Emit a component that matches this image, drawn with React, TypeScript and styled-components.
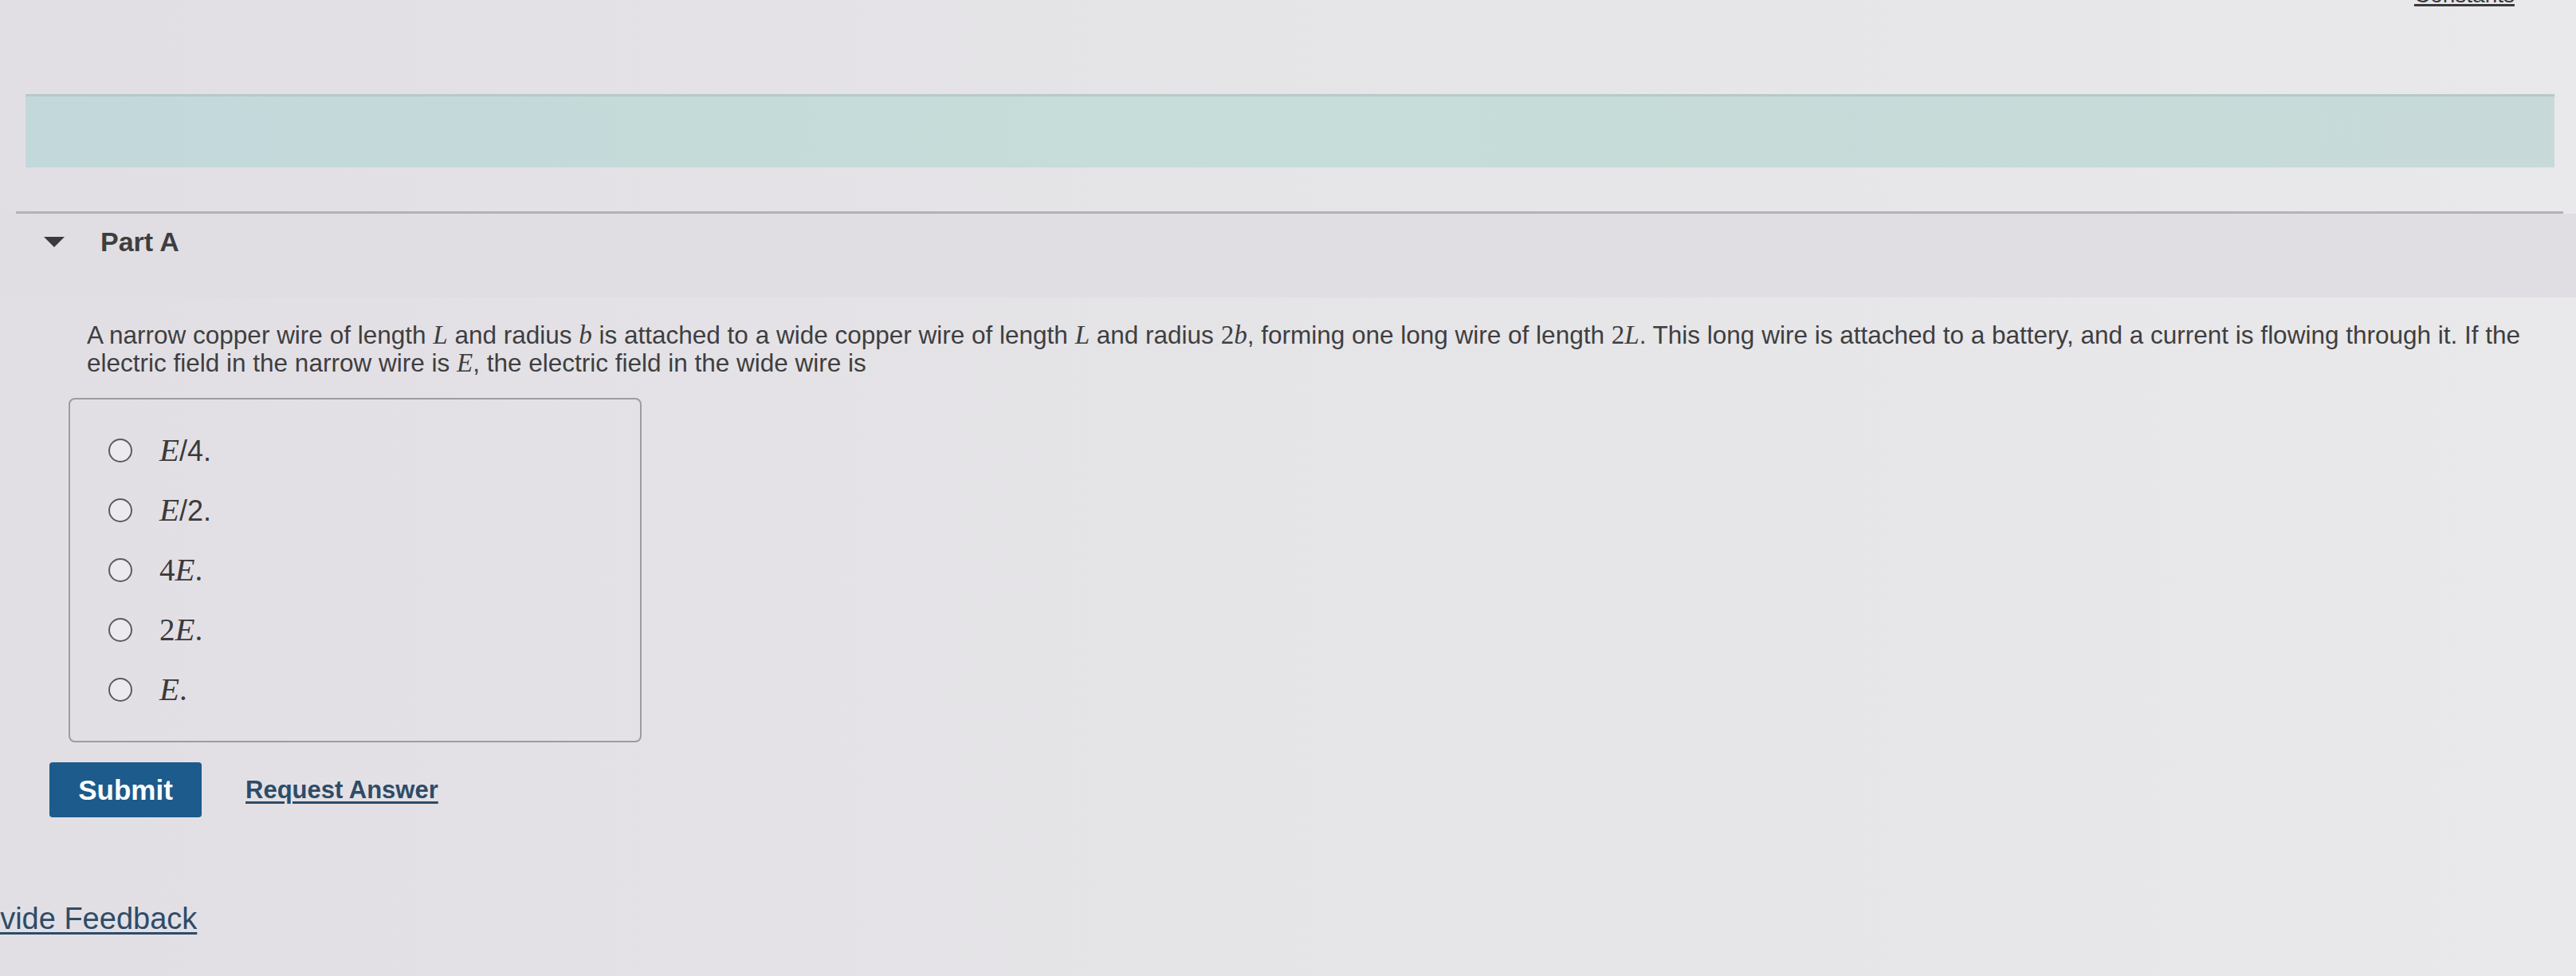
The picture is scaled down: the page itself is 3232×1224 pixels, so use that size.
import React from "react";
import styled, { createGlobalStyle } from "styled-components";

const GlobalStyle = createGlobalStyle`
  html, body {
    margin: 0;
    padding: 0;
    background: #e3e2e6;
  }
  body {
    width: 3232px;
    height: 1224px;
    overflow: hidden;
    font-family: "Liberation Sans", Arial, sans-serif;
    color: #3a3a3c;
  }
`;

const Page = styled.div`
  width: 3232px;
  height: 1224px;
  overflow: hidden;
  background: linear-gradient(90deg, #e2dfe4 0%, #e5e4e7 50%, #e9e8ea 100%);
`;

const TopBar = styled.div`
  height: 12px;
  overflow: hidden;
  display: flex;
  justify-content: flex-end;
  padding-right: 77px;
`;

const ConstantsLink = styled.a`
  margin-top: -20px;
  font-size: 28px;
  line-height: 28px;
  color: #3a3a3c;
  text-decoration: underline;
  text-decoration-thickness: 3px;
`;

const Banner = styled.div`
  margin: 106px 27px 0 32px;
  height: 92px;
  background: linear-gradient(90deg, #c3d8db 0%, #c6ddd9 45%, #c7dad9 100%);
  border-top: 3px solid #b7c9ca;
  box-sizing: border-box;
`;

const Divider = styled.div`
  margin: 55px 16px 0 20px;
  height: 3px;
  background: #b3b2b7;
`;

const PartHeader = styled.div`
  height: 105px;
  box-sizing: border-box;
  padding: 0 0 35px 55px;
  display: flex;
  align-items: center;
  gap: 45px;
  background: #e0dee2;
`;

const Caret = styled.span`
  width: 0;
  height: 0;
  border-left: 13px solid transparent;
  border-right: 13px solid transparent;
  border-top: 13px solid #3a3a3c;
`;

const PartTitle = styled.span`
  font-size: 34px;
  font-weight: 700;
  color: #3e3e40;
  line-height: 40px;
`;

const Content = styled.div`
  padding-left: 62px;
`;

const Question = styled.p`
  margin: 30px 0 0 47px;
  font-size: 31.5px;
  line-height: 35px;
  white-space: nowrap;
  color: #3e3e40;
`;

const M = styled.span`
  font-family: "Liberation Serif", "Times New Roman", serif;
  font-style: italic;
  font-size: 1.05em;
`;

const N = styled.span`
  font-family: "Liberation Serif", "Times New Roman", serif;
  font-size: 1.05em;
`;

const OptionsBox = styled.div`
  margin: 26px 0 0 24px;
  width: 719px;
  height: 432px;
  box-sizing: border-box;
  border: 2px solid #9d9ca1;
  border-radius: 8px;
  padding: 26px 0 0 48px;
  display: flex;
  flex-direction: column;
`;

const OptionRow = styled.label`
  height: 75px;
  display: flex;
  align-items: center;
  gap: 34px;
`;

const Radio = styled.span`
  width: 30px;
  height: 30px;
  box-sizing: border-box;
  border: 2px solid #5c5c60;
  border-radius: 50%;
  background: #eceaee;
`;

const OptionLabel = styled.span`
  font-family: "Liberation Serif", "Times New Roman", serif;
  font-size: 39px;
  color: #3a3a3c;
`;

const Sans = styled.span`
  font-family: "Liberation Sans", Arial, sans-serif;
  font-size: 36px;
`;

const Actions = styled.div`
  margin-top: 25px;
  display: flex;
  align-items: center;
  gap: 55px;
`;

const SubmitButton = styled.button`
  width: 191px;
  height: 69px;
  border: none;
  border-radius: 4px;
  background: #1c5b8b;
  color: #ffffff;
  font-family: "Liberation Sans", Arial, sans-serif;
  font-size: 35px;
  font-weight: 700;
  cursor: pointer;
`;

const TextLink = styled.a<{ $bold?: boolean; $size: number }>`
  font-size: ${(p) => p.$size}px;
  font-weight: ${(p) => (p.$bold ? 700 : 400)};
  color: #2e4c68;
  text-decoration: underline;
  text-decoration-thickness: 3px;
  text-underline-offset: 4px;
  cursor: pointer;
`;

const FeedbackRow = styled.div`
  margin: 107px 0 0 -121px;
  line-height: 40px;
`;

const options = [
  { key: "a", label: <><M>E</M><Sans>/4.</Sans></> },
  { key: "b", label: <><M>E</M><Sans>/2.</Sans></> },
  { key: "c", label: <>4<M>E</M>.</> },
  { key: "d", label: <>2<M>E</M>.</> },
  { key: "e", label: <><M>E</M>.</> },
];

const App = () => {
  return (
    <Page>
      <GlobalStyle />
      <TopBar>
        <ConstantsLink>Constants</ConstantsLink>
      </TopBar>
      <Banner />
      <Divider />
      <PartHeader>
        <Caret />
        <PartTitle>Part A</PartTitle>
      </PartHeader>
      <Content>
        <Question>
          A narrow copper wire of length <M>L</M> and radius <M>b</M> is attached to a wide copper
          wire of length <M>L</M> and radius <N>2</N><M>b</M>, forming one long wire of length{" "}
          <N>2</N><M>L</M>. This long wire is attached to a battery, and a current is flowing
          through it. If the
          <br />
          electric field in the narrow wire is <M>E</M>, the electric field in the wide wire is
        </Question>
        <OptionsBox>
          {options.map((o) => (
            <OptionRow key={o.key}>
              <Radio />
              <OptionLabel>{o.label}</OptionLabel>
            </OptionRow>
          ))}
        </OptionsBox>
        <Actions>
          <SubmitButton>Submit</SubmitButton>
          <TextLink $bold $size={31}>Request Answer</TextLink>
        </Actions>
        <FeedbackRow>
          <TextLink $size={38}>Provide Feedback</TextLink>
        </FeedbackRow>
      </Content>
    </Page>
  );
};

export default App;
